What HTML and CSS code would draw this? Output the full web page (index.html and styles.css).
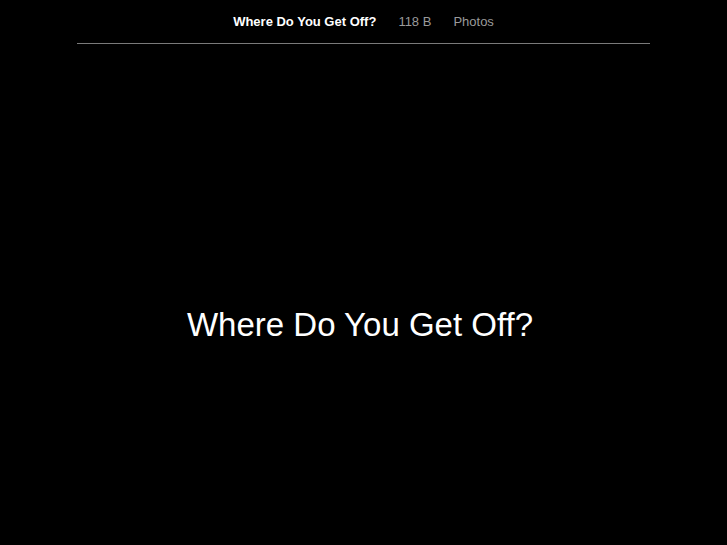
FILE: index.html
```html
<!DOCTYPE html>
<html>
<head>
<meta charset="utf-8">
<link rel="stylesheet" href="styles.css">
</head>
<body>
<div class="wrap">
  <nav class="nav">
    <a class="nav-item active" href="#">Where Do You Get Off?</a>
    <a class="nav-item" href="#">118 B</a>
    <a class="nav-item" href="#">Photos</a>
  </nav>
  <main class="stage">
    <h1 class="title">Where Do You Get Off?</h1>
  </main>
</div>
</body>
</html>
```
FILE: styles.css
```css
html, body {
  margin: 0;
  padding: 0;
  background: #000;
  height: 100%;
}
body {
  font-family: "Liberation Sans", Arial, sans-serif;
  color: #fff;
}
.wrap {
  width: 573px;
  margin: 0 auto;
}
.nav {
  display: flex;
  justify-content: center;
  gap: 22px;
  padding-top: 14px;
  border-bottom: 1px solid #7a7a7a;
  box-sizing: border-box;
  height: 44px;
}
.nav-item {
  font-size: 13px;
  color: #9a9a9a;
  text-decoration: none;
  line-height: 16px;
}
.nav-item.active {
  color: #fff;
  font-weight: bold;
}
.stage {
  display: flex;
  justify-content: center;
  padding-top: 263px;
  padding-right: 7px;
}
.title {
  margin: 0;
  font-size: 33px;
  font-weight: normal;
  line-height: 36px;
  color: #fff;
}
```
